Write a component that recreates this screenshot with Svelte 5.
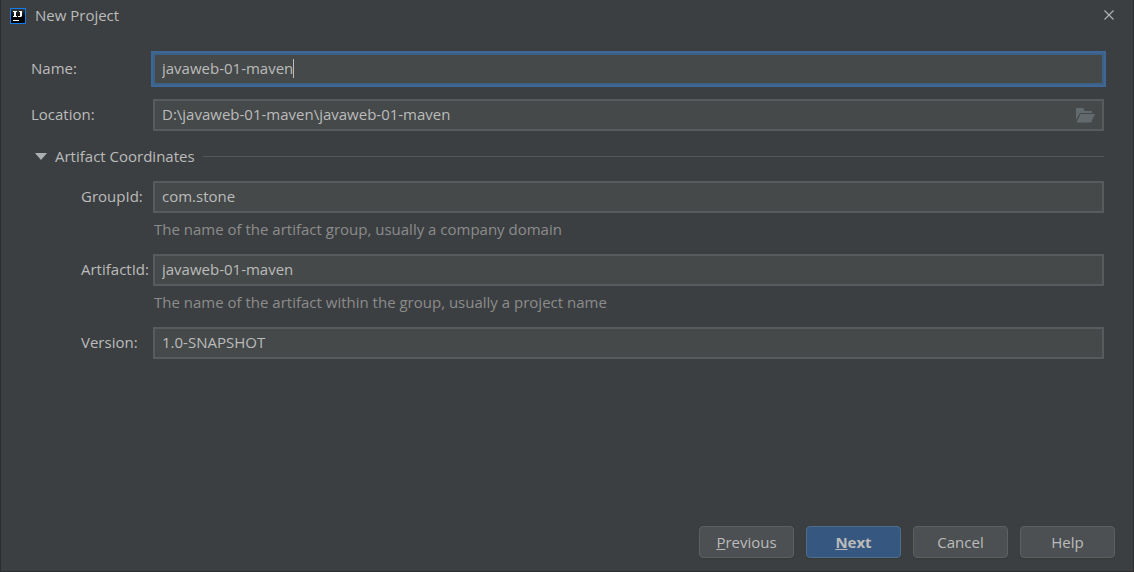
<script>
  import { onMount } from 'svelte';

  let name = $state('javaweb-01-maven');
  let location = $state('D:\\javaweb-01-maven\\javaweb-01-maven');
  let groupId = $state('com.stone');
  let artifactId = $state('javaweb-01-maven');
  let version = $state('1.0-SNAPSHOT');
  let open = $state(true);

  let nameInput;
  let caret = $state(0);

  function placeCaret() {
    const style = getComputedStyle(nameInput);
    const ctx = document.createElement('canvas').getContext('2d');
    ctx.font = `${style.fontSize} ${style.fontFamily}`;
    caret = Math.round(ctx.measureText(name).width + parseFloat(style.paddingLeft) + parseFloat(style.borderLeftWidth));
  }

  onMount(placeCaret);
</script>

<main class="dialog">
  <header class="titlebar">
    <svg class="logo" width="16" height="16" viewBox="0 0 16 16" aria-hidden="true">
      <defs>
        <linearGradient id="tile" x1="0" y1="0" x2="0" y2="1">
          <stop offset="0" stop-color="#3a3a3a" />
          <stop offset=".6" stop-color="#000" />
        </linearGradient>
      </defs>
      <rect width="16" height="16" fill="#0f7df0" />
      <rect x="1" y="1" width="14" height="14" fill="url(#tile)" />
      <path d="M3 3h4v1H6v4h1v1H3V8h1V4H3zM9 3h3v5l-1 1H8V8h2V4H9zM3 12h6v1H3z" fill="#fff" />
    </svg>
    <h1>New Project</h1>
    <button class="close" aria-label="Close">
      <svg width="10" height="10" viewBox="0 0 10 10"><path d="M.5.5l9 9M9.500.5l-9 9" stroke="#b4b6b7" stroke-width="1.100" /></svg>
    </button>
  </header>

  <form class="form" onsubmit={(e) => e.preventDefault()}>
    <div class="row">
      <label for="name">Name:</label>
      <div class="field active">
        <input id="name" type="text" bind:value={name} bind:this={nameInput} oninput={placeCaret} />
        <span class="caret" style="left: {caret}px"></span>
      </div>
    </div>
    <div class="row">
      <label for="location">Location:</label>
      <div class="field">
        <input id="location" type="text" bind:value={location} />
        <button class="browse" type="button" aria-label="Browse">
          <svg width="19" height="15" viewBox="0 0 19 15"><path d="M0 0h7l2 3h7v2H4L0 12z" fill="#636a6e" /><path d="M4.500 6H19l-4 8.500H.5z" fill="#636a6e" /></svg>
        </button>
      </div>
    </div>

    <button class="section" type="button" aria-expanded={open} onclick={() => (open = !open)}>
      <svg width="12" height="7" viewBox="0 0 12 7"><path d="M0 0h12L6 7z" fill="#adafb1" /></svg>
      <span>Artifact Coordinates</span>
      <span class="rule"></span>
    </button>

    {#if open}
      <div class="row nested">
        <label for="group">GroupId:</label>
        <div class="field"><input id="group" type="text" bind:value={groupId} /></div>
        <p>The name of the artifact group, usually a company domain</p>
      </div>
      <div class="row nested">
        <label for="artifact">ArtifactId:</label>
        <div class="field"><input id="artifact" type="text" bind:value={artifactId} /></div>
        <p>The name of the artifact within the group, usually a project name</p>
      </div>
      <div class="row nested">
        <label for="version">Version:</label>
        <div class="field"><input id="version" type="text" bind:value={version} /></div>
      </div>
    {/if}
  </form>

  <footer class="actions">
    <button><u>P</u>revious</button>
    <button class="primary"><u>N</u>ext</button>
    <button>Cancel</button>
    <button>Help</button>
  </footer>
</main>

<style>
  :global(body) {
    background: #3c3f41;
  }
  .dialog, .dialog * {
    box-sizing: border-box;
  }
  .dialog {
    display: flex;
    flex-direction: column;
    min-height: 100vh;
    border: 1px solid #2b2d2f;
    border-top: 0;
    background: #3c3f41;
    color: #bbbbbb;
    font: 15px/20px "Open Sans", "Noto Sans", sans-serif;
  }
  button, input {
    font: inherit;
    color: inherit;
  }
  .titlebar {
    display: flex;
    align-items: center;
    gap: 9px;
    height: 32px;
    padding: 0 19px 2px 9px;
  }
  .logo {
    margin-top: 2px;
  }
  h1 {
    flex: 1;
    margin: 0;
    font-size: 15px;
    font-weight: 400;
  }
  .close, .browse {
    display: flex;
    padding: 0;
    border: 0;
    background: none;
  }
  .form {
    flex: 1;
    padding: 21px 29px 0 30px;
  }
  .row {
    display: grid;
    grid-template-columns: 122px 1fr;
    align-items: center;
    margin-bottom: 14px;
  }
  .nested {
    margin-bottom: 12px;
  }
  label {
    padding-bottom: 2px;
  }
  .nested label {
    padding-left: 50px;
  }
  .field {
    position: relative;
    display: flex;
    align-items: center;
  }
  input {
    width: 100%;
    height: 32px;
    padding: 0 7px 2px;
    border: 2px solid #585b5d;
    background: #45494a;
    outline: 0;
  }
  .active input {
    border-color: #3d6185;
    box-shadow: 0 0 0 2px #3d6796;
    caret-color: transparent;
  }
  .caret {
    position: absolute;
    top: 6px;
    width: 1px;
    height: 19px;
    background: #bbbbbb;
  }
  .browse {
    position: absolute;
    right: 9px;
  }
  p {
    grid-column: 2;
    margin: 6px 0 3px 1px;
    color: #8c8c8c;
  }
  .section {
    display: flex;
    align-items: center;
    gap: 8px;
    width: 100%;
    margin: 15px 0;
    padding: 0 0 0 4px;
    border: 0;
    background: none;
  }
  .rule {
    flex: 1;
    height: 1px;
    background: #555759;
  }
  .actions {
    display: flex;
    justify-content: flex-end;
    gap: 12px;
    padding: 0 18px 13px;
  }
  .actions button {
    width: 95px;
    height: 32px;
    padding: 0;
    border: 1px solid #5e6060;
    border-radius: 4px;
    background: #4c5052;
    box-shadow: 0 1px 1px #36393a;
  }
  .actions .primary {
    border-color: #4c708c;
    background: #365880;
    font-weight: 700;
  }
</style>
